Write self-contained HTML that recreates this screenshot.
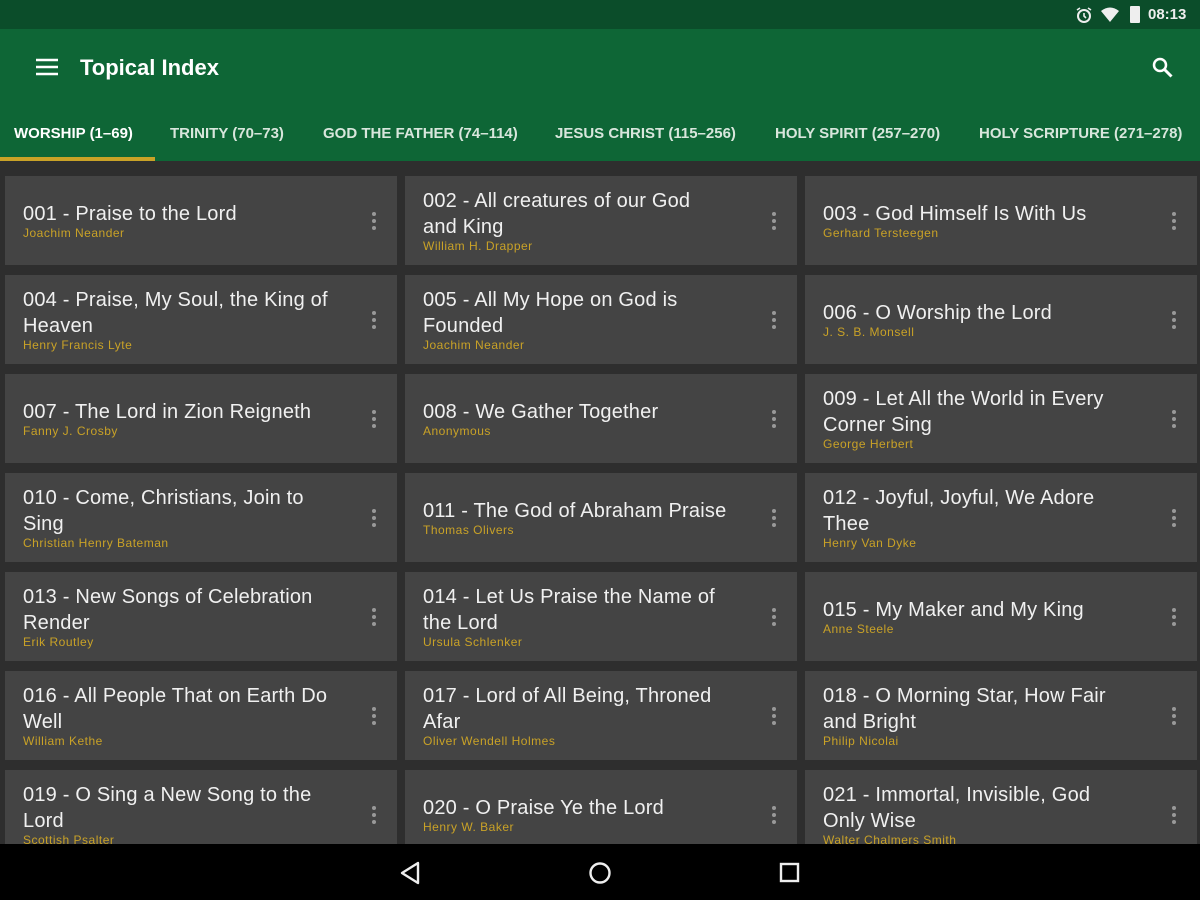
<!DOCTYPE html><html><head><style>
*{margin:0;padding:0;box-sizing:border-box}
body{width:1200px;height:900px;overflow:hidden;background:#2e2e2e;font-family:"Liberation Sans",sans-serif;position:relative}
.sb{position:absolute;left:0;top:0;width:1200px;height:29px;background:#0b4d2a}
.ab{position:absolute;left:0;top:29px;width:1200px;height:132px;background:#0e6636}
.title{position:absolute;left:80px;top:55px;color:#fff;font-size:22px;font-weight:bold}
.tab{position:absolute;top:125px;color:#d8e6dc;font-size:15px;font-weight:bold;white-space:nowrap;letter-spacing:0px}
.ind{position:absolute;left:0;top:157px;width:155px;height:4px;background:#c9a227}
.card{position:absolute;width:392px;height:89px;background:#444;display:flex;flex-direction:column;justify-content:center;padding-left:18px}
.t{color:#f0f0f0;font-size:20px;line-height:26px;letter-spacing:0.2px;width:308px}
.a{color:#c9a227;font-size:12px;line-height:13px;letter-spacing:0.5px}
.dots{position:absolute;right:21px;top:50%;margin-top:-9px;width:4px;height:18px}
.dots i{display:block;width:4px;height:4px;border-radius:2px;background:#999;margin-bottom:3px}
.nav{position:absolute;left:0;top:844px;width:1200px;height:56px;background:#000}
</style></head><body>
<div class="sb"></div>
<svg style="position:absolute;left:1074px;top:6px" width="20" height="18" viewBox="0 0 20 18"><circle cx="10" cy="10" r="6" fill="none" stroke="#eee" stroke-width="2"/><path d="M10 7v3l2 2M3 4l3-2M17 4l-3-2" stroke="#eee" stroke-width="1.6" fill="none"/></svg>
<svg style="position:absolute;left:1100px;top:7px" width="20" height="16" viewBox="0 0 20 16"><path d="M1 4Q10-3 19 4L10 15Z" fill="#eee"/></svg>
<div style="position:absolute;left:1130px;top:6px;width:10px;height:17px;background:#eee;border-radius:1px"></div>
<div style="position:absolute;left:1148px;top:6px;color:#eee;font-size:15px;font-weight:bold">08:13</div>
<div class="ab"></div>
<svg style="position:absolute;left:36px;top:58px" width="22" height="18" viewBox="0 0 22 18"><path d="M0 2h22M0 9h22M0 16h22" stroke="#fff" stroke-width="2.6"/></svg>
<div class="title">Topical Index</div>
<svg style="position:absolute;left:1151px;top:56px" width="24" height="24" viewBox="0 0 24 24"><circle cx="9" cy="9" r="6" fill="none" stroke="#fff" stroke-width="2.5"/><path d="M13.5 13.5l7 7" stroke="#fff" stroke-width="3"/></svg>
<div class="tab" style="left:14px;color:#fff">WORSHIP (1–69)</div>
<div class="tab" style="left:170px">TRINITY (70–73)</div>
<div class="tab" style="left:323px">GOD THE FATHER (74–114)</div>
<div class="tab" style="left:555px">JESUS CHRIST (115–256)</div>
<div class="tab" style="left:775px">HOLY SPIRIT (257–270)</div>
<div class="tab" style="left:979px">HOLY SCRIPTURE (271–278)</div>
<div class="ind"></div>

<div class="card" style="left:5px;top:176px"><div class="t">001 - Praise to the Lord</div><div class="a">Joachim Neander</div><div class="dots"><i></i><i></i><i></i></div></div>
<div class="card" style="left:405px;top:176px"><div class="t">002 - All creatures of our God<br>and King</div><div class="a">William H. Drapper</div><div class="dots"><i></i><i></i><i></i></div></div>
<div class="card" style="left:805px;top:176px"><div class="t">003 - God Himself Is With Us</div><div class="a">Gerhard Tersteegen</div><div class="dots"><i></i><i></i><i></i></div></div>

<div class="card" style="left:5px;top:275px"><div class="t">004 - Praise, My Soul, the King of Heaven</div><div class="a">Henry Francis Lyte</div><div class="dots"><i></i><i></i><i></i></div></div>
<div class="card" style="left:405px;top:275px"><div class="t">005 - All My Hope on God is Founded</div><div class="a">Joachim Neander</div><div class="dots"><i></i><i></i><i></i></div></div>
<div class="card" style="left:805px;top:275px"><div class="t">006 - O Worship the Lord</div><div class="a">J. S. B. Monsell</div><div class="dots"><i></i><i></i><i></i></div></div>

<div class="card" style="left:5px;top:374px"><div class="t">007 - The Lord in Zion Reigneth</div><div class="a">Fanny J. Crosby</div><div class="dots"><i></i><i></i><i></i></div></div>
<div class="card" style="left:405px;top:374px"><div class="t">008 - We Gather Together</div><div class="a">Anonymous</div><div class="dots"><i></i><i></i><i></i></div></div>
<div class="card" style="left:805px;top:374px"><div class="t">009 - Let All the World in Every Corner Sing</div><div class="a">George Herbert</div><div class="dots"><i></i><i></i><i></i></div></div>

<div class="card" style="left:5px;top:473px"><div class="t">010 - Come, Christians, Join to Sing</div><div class="a">Christian Henry Bateman</div><div class="dots"><i></i><i></i><i></i></div></div>
<div class="card" style="left:405px;top:473px"><div class="t">011 - The God of Abraham Praise</div><div class="a">Thomas Olivers</div><div class="dots"><i></i><i></i><i></i></div></div>
<div class="card" style="left:805px;top:473px"><div class="t">012 - Joyful, Joyful, We Adore Thee</div><div class="a">Henry Van Dyke</div><div class="dots"><i></i><i></i><i></i></div></div>

<div class="card" style="left:5px;top:572px"><div class="t">013 - New Songs of Celebration Render</div><div class="a">Erik Routley</div><div class="dots"><i></i><i></i><i></i></div></div>
<div class="card" style="left:405px;top:572px"><div class="t">014 - Let Us Praise the Name of the Lord</div><div class="a">Ursula Schlenker</div><div class="dots"><i></i><i></i><i></i></div></div>
<div class="card" style="left:805px;top:572px"><div class="t">015 - My Maker and My King</div><div class="a">Anne Steele</div><div class="dots"><i></i><i></i><i></i></div></div>

<div class="card" style="left:5px;top:671px"><div class="t">016 - All People That on Earth Do Well</div><div class="a">William Kethe</div><div class="dots"><i></i><i></i><i></i></div></div>
<div class="card" style="left:405px;top:671px"><div class="t">017 - Lord of All Being, Throned Afar</div><div class="a">Oliver Wendell Holmes</div><div class="dots"><i></i><i></i><i></i></div></div>
<div class="card" style="left:805px;top:671px"><div class="t">018 - O Morning Star, How Fair and Bright</div><div class="a">Philip Nicolai</div><div class="dots"><i></i><i></i><i></i></div></div>

<div class="card" style="left:5px;top:770px"><div class="t">019 - O Sing a New Song to the Lord</div><div class="a">Scottish Psalter</div><div class="dots"><i></i><i></i><i></i></div></div>
<div class="card" style="left:405px;top:770px"><div class="t">020 - O Praise Ye the Lord</div><div class="a">Henry W. Baker</div><div class="dots"><i></i><i></i><i></i></div></div>
<div class="card" style="left:805px;top:770px"><div class="t">021 - Immortal, Invisible, God Only Wise</div><div class="a">Walter Chalmers Smith</div><div class="dots"><i></i><i></i><i></i></div></div>

<div class="nav"></div>
<svg style="position:absolute;left:398px;top:860px" width="24" height="26" viewBox="0 0 24 26"><path d="M20 3L4 13l16 10Z" fill="none" stroke="#eee" stroke-width="2.4" stroke-linejoin="round"/></svg>
<svg style="position:absolute;left:588px;top:861px" width="24" height="24" viewBox="0 0 24 24"><circle cx="12" cy="12" r="9.5" fill="none" stroke="#eee" stroke-width="2.4"/></svg>
<svg style="position:absolute;left:779px;top:862px" width="22" height="22" viewBox="0 0 22 22"><rect x="2" y="2" width="17" height="17" fill="none" stroke="#eee" stroke-width="2.4"/></svg>
</body></html>
